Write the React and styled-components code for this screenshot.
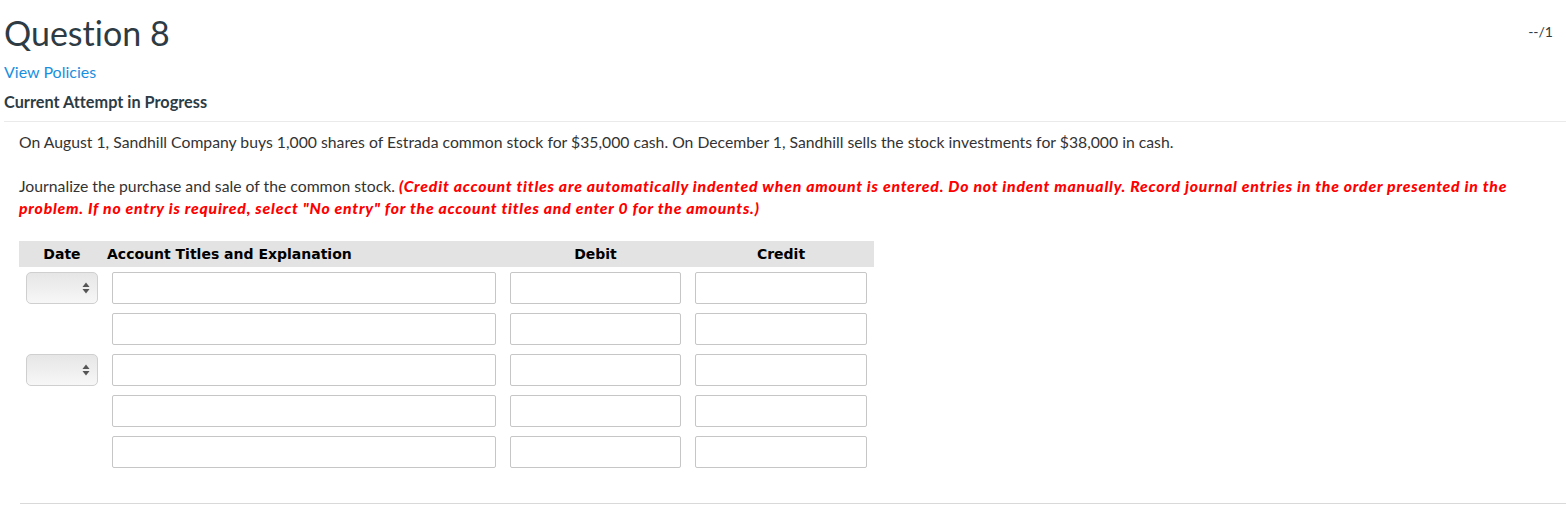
import React from 'react';
import styled, { createGlobalStyle } from 'styled-components';

const GlobalStyle = createGlobalStyle`
  body {
    margin: 0;
    background: #fff;
    font-family: Lato, "Open Sans", sans-serif;
    font-variant-ligatures: none;
    color: #2d3b45;
  }
`;

const rows = [
  { date: true },
  { date: false },
  { date: true },
  { date: false },
  { date: false },
];

function App() {
  return (
    <Page>
      <GlobalStyle />
      <Header>
        <Title>Question 8</Title>
        <Score>--/1</Score>
      </Header>
      <PolicyLink href="#">View Policies</PolicyLink>
      <Attempt>Current Attempt in Progress</Attempt>
      <Body>
        <Text>
          On August 1, Sandhill Company buys 1,000 shares of Estrada common stock for $35,000 cash. On December 1,
          Sandhill sells the stock investments for $38,000 in cash.
        </Text>
        <Instructions>
          Journalize the purchase and sale of the common stock.{' '}
          <Warning>
            (Credit account titles are automatically indented when amount is entered. Do not indent manually. Record
            journal entries in the order presented in the problem. If no entry is required, select "No entry" for the
            account titles and enter 0 for the amounts.)
          </Warning>
        </Instructions>
        <Journal>
          <HeadCell>Date</HeadCell>
          <HeadCell $align="left">Account Titles and Explanation</HeadCell>
          <HeadCell>Debit</HeadCell>
          <HeadCell>Credit</HeadCell>
          {rows.map((row, i) => (
            <React.Fragment key={i}>
              <Cell>
                {row.date && (
                  <DateSelect>
                    <Arrows>
                      <svg width="8" height="12" viewBox="0 0 8 12">
                        <path d="M4 0.5 L7.5 5 L0.5 5 Z" fill="#555" />
                        <path d="M4 11.5 L7.5 7 L0.5 7 Z" fill="#555" />
                      </svg>
                    </Arrows>
                  </DateSelect>
                )}
              </Cell>
              <Cell>
                <Field />
              </Cell>
              <Cell>
                <Field />
              </Cell>
              <Cell>
                <Field />
              </Cell>
            </React.Fragment>
          ))}
        </Journal>
      </Body>
    </Page>
  );
}

const Page = styled.div`
  width: 1566px;
  height: 505px;
  overflow: hidden;
  padding-left: 4px;
  box-sizing: border-box;
`;

const Header = styled.div`
  display: flex;
  justify-content: space-between;
  align-items: flex-start;
  padding-top: 12px;
`;

const Title = styled.h1`
  margin: 0;
  font-size: 34px;
  font-weight: 400;
  line-height: 42px;
  color: #2d3b45;
`;

const Score = styled.div`
  font-size: 14px;
  line-height: 20px;
  padding: 10px 13px 0 0;
  color: #2d3b45;
`;

const PolicyLink = styled.a`
  display: block;
  margin-top: 7px;
  font-size: 16px;
  line-height: 22px;
  color: #1a8fe0;
  text-decoration: none;
`;

const Attempt = styled.div`
  margin-top: 8px;
  font-size: 16.3px;
  font-weight: 700;
  line-height: 22px;
  color: #2d3b45;
`;

const Body = styled.div`
  margin-top: 8px;
  border-top: 1px solid #eaeaea;
  padding: 9px 0 0 15px;
  height: 384px;
  box-sizing: border-box;
  position: relative;
  &::after {
    content: '';
    position: absolute;
    left: 16px;
    right: 0;
    bottom: 1px;
    border-top: 1px solid #d9d9d9;
  }
`;

const Text = styled.p`
  margin: 0;
  font-size: 15.75px;
  line-height: 22px;
  color: #333;
`;

const Instructions = styled(Text)`
  margin-top: 22px;
  width: 1520px;
`;

const Warning = styled.span`
  color: #ff0000;
  font-weight: 900;
  font-style: italic;
  letter-spacing: 0.77px;
`;

const Journal = styled.div`
  display: grid;
  grid-template-columns: 86px 398px 185px 186px;
  grid-auto-rows: 41px;
  grid-template-rows: 26px;
  margin-top: 22px;
  width: 855px;
  font-family: "DejaVu Sans", Verdana, sans-serif;
  & > :nth-child(-n + 4) {
    background: #e3e3e3;
  }
`;

const HeadCell = styled.div`
  display: flex;
  align-items: center;
  justify-content: ${(p) => (p.$align === 'left' ? 'flex-start' : 'center')};
  padding-left: ${(p) => (p.$align === 'left' ? '2px' : '0')};
  font-size: 14px;
  font-weight: 700;
  color: #000;
`;

const Cell = styled.div`
  padding: 5px 7px 0;
  box-sizing: border-box;
`;

const Field = styled.div`
  height: 32px;
  border: 1px solid #c6c6c6;
  border-radius: 2px;
  box-sizing: border-box;
  background: #fff;
`;

const DateSelect = styled.div`
  width: 72px;
  height: 32px;
  box-sizing: border-box;
  border: 1px solid #cfcfcf;
  border-radius: 5px;
  background: linear-gradient(#e6e6e6, #f7f7f7);
  display: flex;
  align-items: center;
  justify-content: flex-end;
  padding-right: 7px;
`;

const Arrows = styled.span`
  display: flex;
`;

export default App;
